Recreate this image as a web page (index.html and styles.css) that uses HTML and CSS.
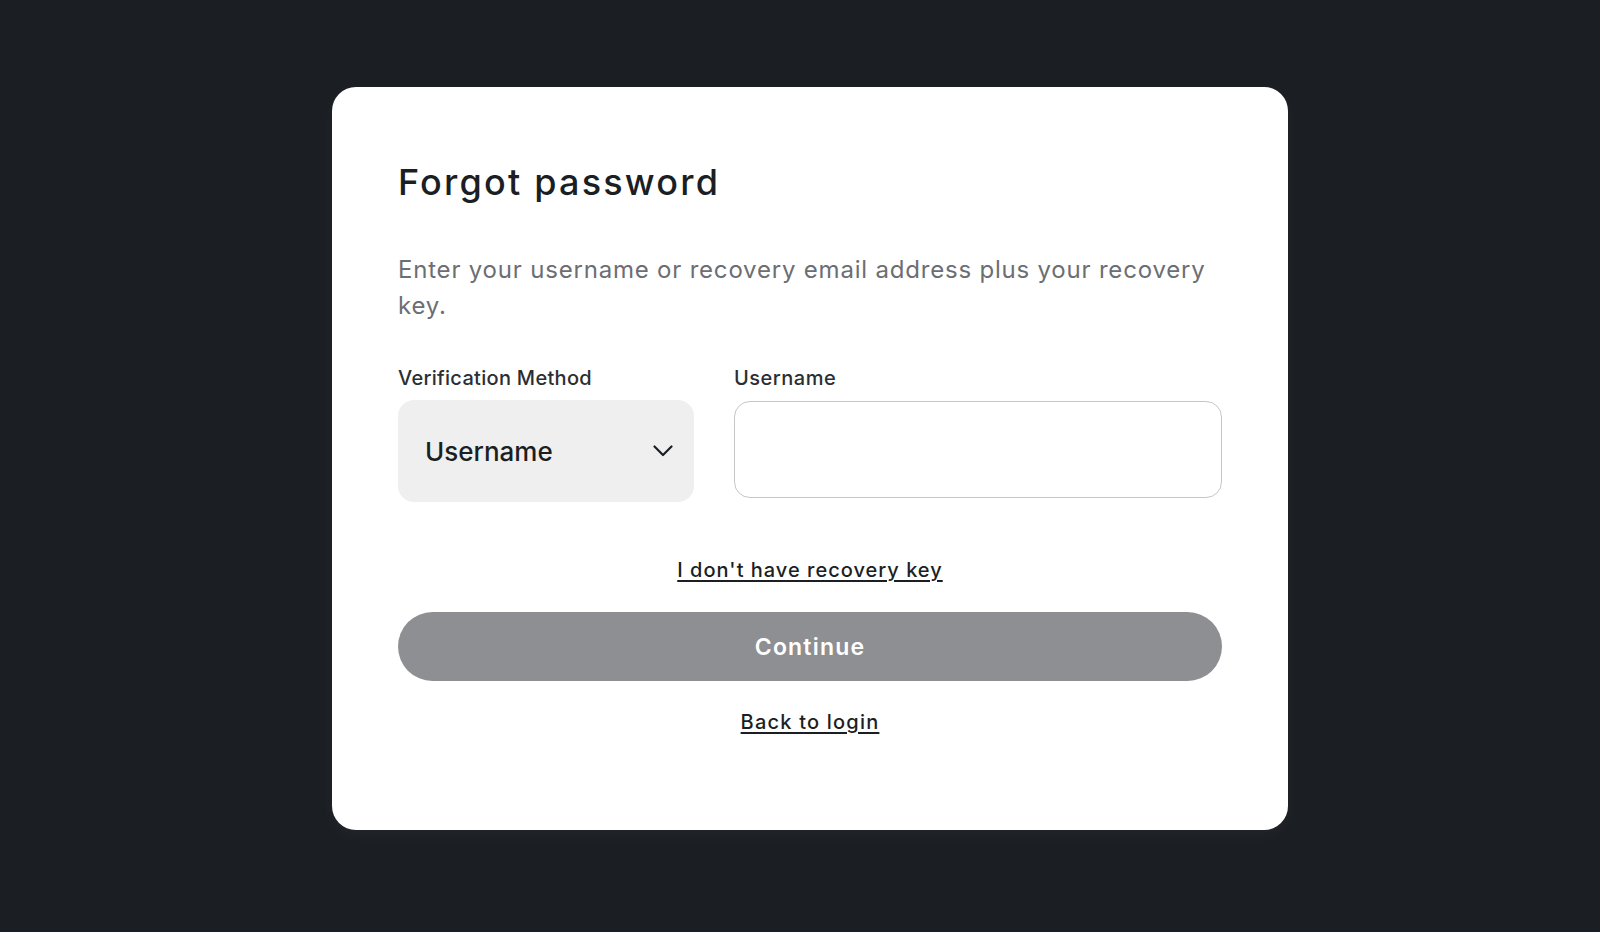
FILE: index.html
```html
<!DOCTYPE html>
<html lang="en">
<head>
<meta charset="utf-8">
<title>Forgot password</title>
<link rel="stylesheet" href="styles.css">
</head>
<body>
<div class="page">
  <main class="card">
    <h1 class="title">Forgot password</h1>
    <p class="intro">Enter your username or recovery email address plus your recovery key.</p>
    <div class="fields">
      <div class="field field-method">
        <label class="label">Verification Method</label>
        <div class="select">
          <span class="select-value">Username</span>
          <svg class="chevron" width="20" height="12" viewBox="0 0 20 12" aria-hidden="true"><polyline points="1.5,1.5 10,10 18.5,1.5" fill="none" stroke="#1b1f23" stroke-width="2.2" stroke-linecap="round" stroke-linejoin="round"/></svg>
        </div>
      </div>
      <div class="field field-user">
        <label class="label label-user" for="username">Username</label>
        <input class="input" id="username" type="text">
      </div>
    </div>
    <div class="link-row link-row-key"><a class="link link-key" href="#">I don't have recovery key</a></div>
    <button class="btn" type="button">Continue</button>
    <div class="link-row link-row-back"><a class="link link-back" href="#">Back to login</a></div>
  </main>
</div>
</body>
</html>
```
FILE: styles.css
```css
* { box-sizing: border-box; }
html, body { margin: 0; padding: 0; }
body {
  background: #1b1f23;
  font-family: "Inter", "Noto Sans", sans-serif;
  color: #1b1f23;
  height: 932px;
  overflow: hidden;
}
.page {
  display: flex;
  justify-content: center;
  padding: 87px 0 0 20px;
}
.card {
  width: 956px;
  height: 743px;
  background: #ffffff;
  border-radius: 24px;
  padding: 74px 66px 0 66px;
  box-shadow: 0 6px 18px rgba(255,255,255,0.03);
}
.title {
  margin: 0;
  font-size: 36px;
  line-height: 43px;
  font-weight: 500;
  color: #1b1f23;
  letter-spacing: 2.2px;
}
.intro {
  margin: 48px 0 0 0;
  font-size: 24px;
  line-height: 36px;
  font-weight: 400;
  color: #6b6e73;
  letter-spacing: 0.8px;
}
.fields {
  display: flex;
  gap: 40px;
  margin-top: 42px;
  align-items: flex-start;
}
.field { display: flex; flex-direction: column; }
.field-method { width: 296px; }
.field-user { flex: 1; }
.label {
  font-size: 20px;
  line-height: 24px;
  font-weight: 500;
  color: #2b2e33;
  margin-bottom: 10px;
  letter-spacing: 0.3px;
}
.label-user { letter-spacing: 0.5px; }
.select {
  height: 102px;
  background: #efefef;
  border-radius: 16px;
  display: flex;
  align-items: center;
  justify-content: space-between;
  padding: 0 21px 0 27px;
}
.select-value {
  font-size: 26px;
  font-weight: 500;
  color: #1b1f23;
}
.chevron { display: block; }
.input {
  height: 97px;
  margin-top: 1px;
  border: 1.5px solid #c6c6c6;
  border-radius: 16px;
  background: #fff;
  font: inherit;
  font-size: 24px;
  padding: 0 24px;
  outline: none;
}
.link-row {
  display: flex;
  justify-content: center;
}
.link-row-key { margin-top: 54px; }
.link-row-back { margin-top: 27px; }
.link {
  font-size: 20px;
  line-height: 28px;
  font-weight: 500;
  color: #1b1f23;
  text-decoration: underline;
  text-decoration-thickness: 1.5px;
  text-underline-offset: 3px;
}
.link-key { letter-spacing: 1px; }
.link-back { letter-spacing: 1.2px; }
.btn {
  display: block;
  width: 100%;
  height: 69px;
  margin-top: 28px;
  border: none;
  border-radius: 35px;
  background: #8e8f93;
  color: #ffffff;
  font-family: inherit;
  font-size: 23px;
  font-weight: 600;
  letter-spacing: 1.2px;
}
```
